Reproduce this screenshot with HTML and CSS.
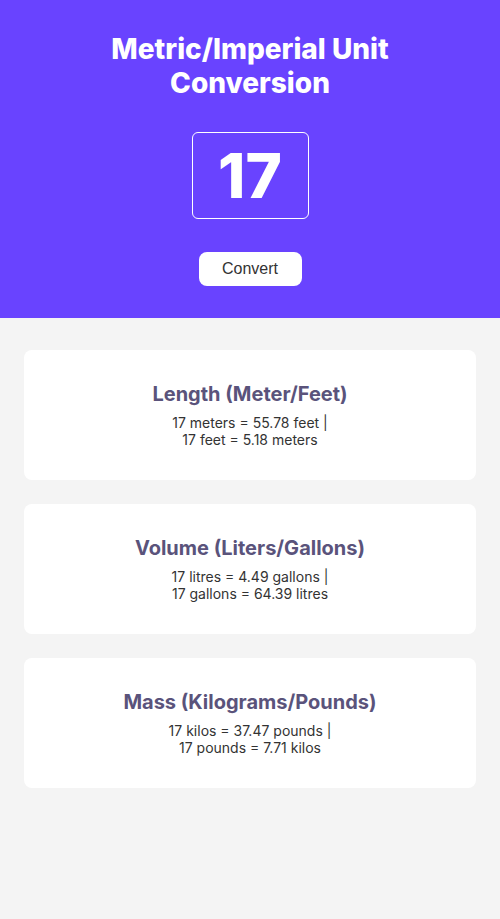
FILE: index.html
```html
<!DOCTYPE html>
<html lang="en">
<head>
<meta charset="utf-8">
<title>Metric/Imperial Unit Conversion</title>
<link rel="stylesheet" href="styles.css">
</head>
<body>
<header class="hero">
  <h1 class="hero-title">Metric/Imperial Unit Conversion</h1>
  <div class="num-box">17</div>
  <button class="convert-btn" type="button">Convert</button>
</header>
<main class="cards">
  <section class="card">
    <h2 class="card-title">Length (Meter/Feet)</h2>
    <p class="card-text">17 meters = 55.78 feet |<br>17 feet = 5.18 meters</p>
  </section>
  <section class="card">
    <h2 class="card-title">Volume (Liters/Gallons)</h2>
    <p class="card-text">17 litres = 4.49 gallons |<br>17 gallons = 64.39 litres</p>
  </section>
  <section class="card">
    <h2 class="card-title">Mass (Kilograms/Pounds)</h2>
    <p class="card-text">17 kilos = 37.47 pounds |<br>17 pounds = 7.71 kilos</p>
  </section>
</main>
</body>
</html>
```
FILE: styles.css
```css
* { box-sizing: border-box; }
html, body { margin: 0; padding: 0; }
body {
  font-family: Inter, "Noto Sans", sans-serif;
  background: #f4f4f4;
  min-height: 919px;
}
.hero {
  background: #6943ff;
  padding: 32px 32px 32px;
  display: flex;
  flex-direction: column;
  align-items: center;
  color: #fff;
}
.hero-title {
  margin: 0;
  font-size: 28px;
  line-height: 34px;
  font-weight: 800;
  text-align: center;
  max-width: 300px;
}
.num-box {
  margin-top: 32px;
  width: 117px;
  height: 87px;
  border: 1px solid #fff;
  border-radius: 6px;
  display: flex;
  align-items: center;
  justify-content: center;
  font-size: 62px;
  font-weight: 800;
}
.convert-btn {
  margin-top: 33px;
  width: 103px;
  height: 34px;
  border: none;
  border-radius: 8px;
  background: #fff;
  color: #333;
  font-family: "Liberation Sans", Arial, sans-serif;
  font-size: 16px;
  padding: 0;
}
.cards {
  padding: 32px 24px;
  display: flex;
  flex-direction: column;
  gap: 24px;
}
.card {
  background: #fff;
  border-radius: 8px;
  padding: 32px 16px;
  text-align: center;
}
.card-title {
  margin: 0 0 8px;
  font-size: 20px;
  line-height: 24px;
  font-weight: 700;
  color: #5a537b;
}
.card-text {
  margin: 0;
  font-size: 14px;
  line-height: 17px;
  color: #333;
}
```
